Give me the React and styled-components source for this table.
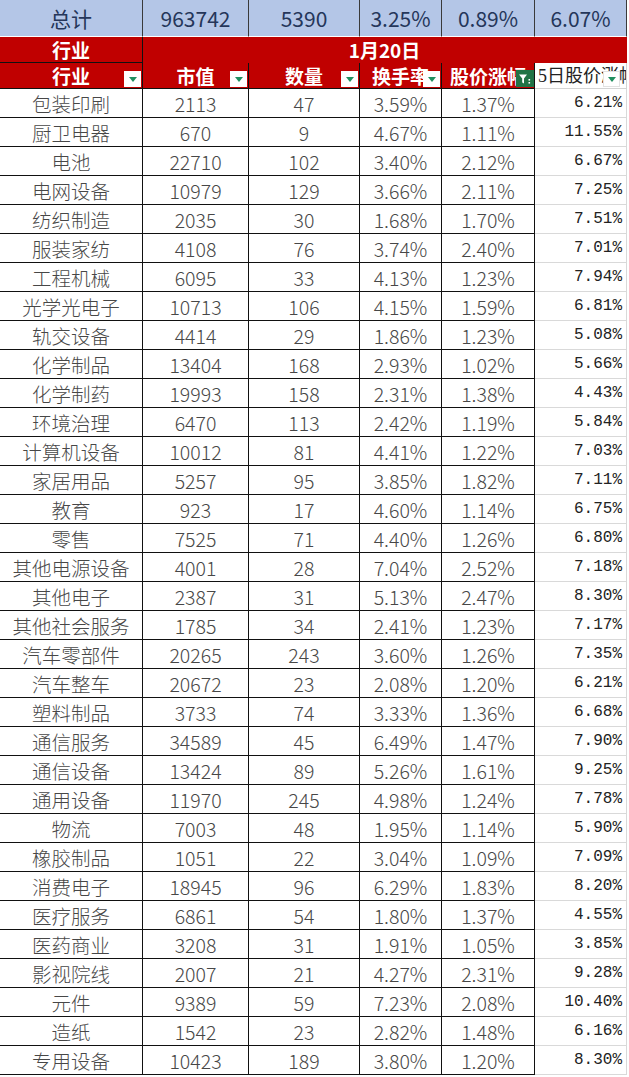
import React from "react";
import styled, { createGlobalStyle, css } from "styled-components";

const rows = [
  ["包装印刷", 2113, 47, "3.59%", "1.37%", "6.21%"],
  ["厨卫电器", 670, 9, "4.67%", "1.11%", "11.55%"],
  ["电池", 22710, 102, "3.40%", "2.12%", "6.67%"],
  ["电网设备", 10979, 129, "3.66%", "2.11%", "7.25%"],
  ["纺织制造", 2035, 30, "1.68%", "1.70%", "7.51%"],
  ["服装家纺", 4108, 76, "3.74%", "2.40%", "7.01%"],
  ["工程机械", 6095, 33, "4.13%", "1.23%", "7.94%"],
  ["光学光电子", 10713, 106, "4.15%", "1.59%", "6.81%"],
  ["轨交设备", 4414, 29, "1.86%", "1.23%", "5.08%"],
  ["化学制品", 13404, 168, "2.93%", "1.02%", "5.66%"],
  ["化学制药", 19993, 158, "2.31%", "1.38%", "4.43%"],
  ["环境治理", 6470, 113, "2.42%", "1.19%", "5.84%"],
  ["计算机设备", 10012, 81, "4.41%", "1.22%", "7.03%"],
  ["家居用品", 5257, 95, "3.85%", "1.82%", "7.11%"],
  ["教育", 923, 17, "4.60%", "1.14%", "6.75%"],
  ["零售", 7525, 71, "4.40%", "1.26%", "6.80%"],
  ["其他电源设备", 4001, 28, "7.04%", "2.52%", "7.18%"],
  ["其他电子", 2387, 31, "5.13%", "2.47%", "8.30%"],
  ["其他社会服务", 1785, 34, "2.41%", "1.23%", "7.17%"],
  ["汽车零部件", 20265, 243, "3.60%", "1.26%", "7.35%"],
  ["汽车整车", 20672, 23, "2.08%", "1.20%", "6.21%"],
  ["塑料制品", 3733, 74, "3.33%", "1.36%", "6.68%"],
  ["通信服务", 34589, 45, "6.49%", "1.47%", "7.90%"],
  ["通信设备", 13424, 89, "5.26%", "1.61%", "9.25%"],
  ["通用设备", 11970, 245, "4.98%", "1.24%", "7.78%"],
  ["物流", 7003, 48, "1.95%", "1.14%", "5.90%"],
  ["橡胶制品", 1051, 22, "3.04%", "1.09%", "7.09%"],
  ["消费电子", 18945, 96, "6.29%", "1.83%", "8.20%"],
  ["医疗服务", 6861, 54, "1.80%", "1.37%", "4.55%"],
  ["医药商业", 3208, 31, "1.91%", "1.05%", "3.85%"],
  ["影视院线", 2007, 21, "4.27%", "2.31%", "9.28%"],
  ["元件", 9389, 59, "7.23%", "2.08%", "10.40%"],
  ["造纸", 1542, 23, "2.82%", "1.48%", "6.16%"],
  ["专用设备", 10423, 189, "3.80%", "1.20%", "8.30%"],
];

const widths = [143, 106, 111, 82, 93, 92];

const GlobalStyle = createGlobalStyle`
  body {
    margin: 0;
    background: #fff;
    font-family: "Noto Sans CJK SC", sans-serif;
  }
`;

const Sheet = styled.table`
  border-collapse: separate;
  border-spacing: 0;
  table-layout: fixed;
  width: 627px;
`;

const TotalRow = styled.tr`
  height: 37px;
`;

const TotalCell = styled.td`
  padding: 0;
  background: #b4c6e7;
  color: #25365a;
  font-size: 21px;
  line-height: 34px;
  text-align: center;
  border-right: 1px solid #3a3a3a;
  border-bottom: 1px solid #fff;
  white-space: nowrap;
  overflow: hidden;
`;

const HeadRow = styled.tr`
  height: 26px;
`;

const HeadCell = styled.th`
  position: relative;
  padding: 0;
  background: #c00000;
  color: #fff;
  font-size: 19px;
  font-weight: 700;
  line-height: 24px;
  text-align: center;
  white-space: nowrap;
  overflow: hidden;
  border-right: 1px solid ${(p) => (p.$merged ? "#c00000" : "#111")};
  border-bottom: 1px solid ${(p) => (p.$merged ? "#c00000" : "#111")};
  ${(p) =>
    p.$plain &&
    css`
      background: #fff;
      color: #222;
      font-family: "Liberation Serif", "Noto Sans CJK SC", serif;
      font-weight: 400;
      font-size: 18px;
      text-align: left;
      padding-left: 3px;
      border-right: 1px solid #d4d4d4;
      border-bottom: 1px solid #d4d4d4;
    `}
`;

const DataRow = styled.tr`
  height: 29px;
`;

const Cell = styled.td`
  padding: 0;
  color: #474747;
  font-size: 19.5px;
  font-weight: 300;
  line-height: 27px;
  text-align: center;
  white-space: nowrap;
  overflow: hidden;
  border-right: 1px solid #111;
  border-bottom: 1px solid #111;
`;

const LooseCell = styled.td`
  padding: 0 4px 0 0;
  color: #222;
  font-family: "Liberation Mono", monospace;
  font-size: 16px;
  line-height: 27px;
  text-align: right;
  white-space: nowrap;
  border-right: 1px solid #d9d9d9;
  border-bottom: 1px solid #d9d9d9;
`;

const Dropdown = styled.span`
  position: absolute;
  right: ${(p) => p.$right || 1}px;
  bottom: 1px;
  width: 17px;
  height: 16px;
  background: #fff;
  border: 1px solid ${(p) => (p.$plain ? "#e2e2e2" : "#fff")};
  box-sizing: border-box;
  display: flex;
  align-items: center;
  justify-content: center;

  &::after {
    content: "";
    border-left: 4px solid transparent;
    border-right: 4px solid transparent;
    border-top: 5px solid #1f8f5f;
  }
`;

const FilterOn = styled.span`
  position: absolute;
  right: 0;
  bottom: 1px;
  width: 18px;
  height: 17px;
  background: #217346;
  display: flex;
  align-items: center;
  justify-content: center;
`;

const FilterIcon = () => (
  <svg width="14" height="12" viewBox="0 0 14 12">
    <path d="M1 1.5h8L6 5.5v5L4.2 9.6V5.5z" fill="#fff" />
    <rect x="10.5" y="6" width="1.6" height="1.6" fill="#fff" />
    <rect x="10.5" y="9" width="1.6" height="1.6" fill="#fff" />
  </svg>
);

const totals = ["总计", "963742", "5390", "3.25%", "0.89%", "6.07%"];
const heads = ["行业", "市值", "数量", "换手率", "股价涨幅"];

export default function App() {
  return (
    <>
      <GlobalStyle />
      <Sheet>
        <colgroup>
          {widths.map((w, i) => (
            <col key={i} style={{ width: w }} />
          ))}
        </colgroup>
        <thead>
          <TotalRow>
            {totals.map((t) => (
              <TotalCell key={t}>{t}</TotalCell>
            ))}
          </TotalRow>
          <HeadRow>
            <HeadCell>行业</HeadCell>
            <HeadCell colSpan={5} $merged>
              1月20日
            </HeadCell>
          </HeadRow>
          <HeadRow>
            {heads.map((h, i) => (
              <HeadCell key={h}>
                {h}
                {i === 4 ? (
                  <FilterOn>
                    <FilterIcon />
                  </FilterOn>
                ) : (
                  <Dropdown />
                )}
              </HeadCell>
            ))}
            <HeadCell $plain>
              5日股价涨幅
              <Dropdown $plain $right={6} />
            </HeadCell>
          </HeadRow>
        </thead>
        <tbody>
          {rows.map((r) => (
            <DataRow key={r[0]}>
              {r.slice(0, 5).map((v, i) => (
                <Cell key={i}>{v}</Cell>
              ))}
              <LooseCell>{r[5]}</LooseCell>
            </DataRow>
          ))}
        </tbody>
      </Sheet>
    </>
  );
}
